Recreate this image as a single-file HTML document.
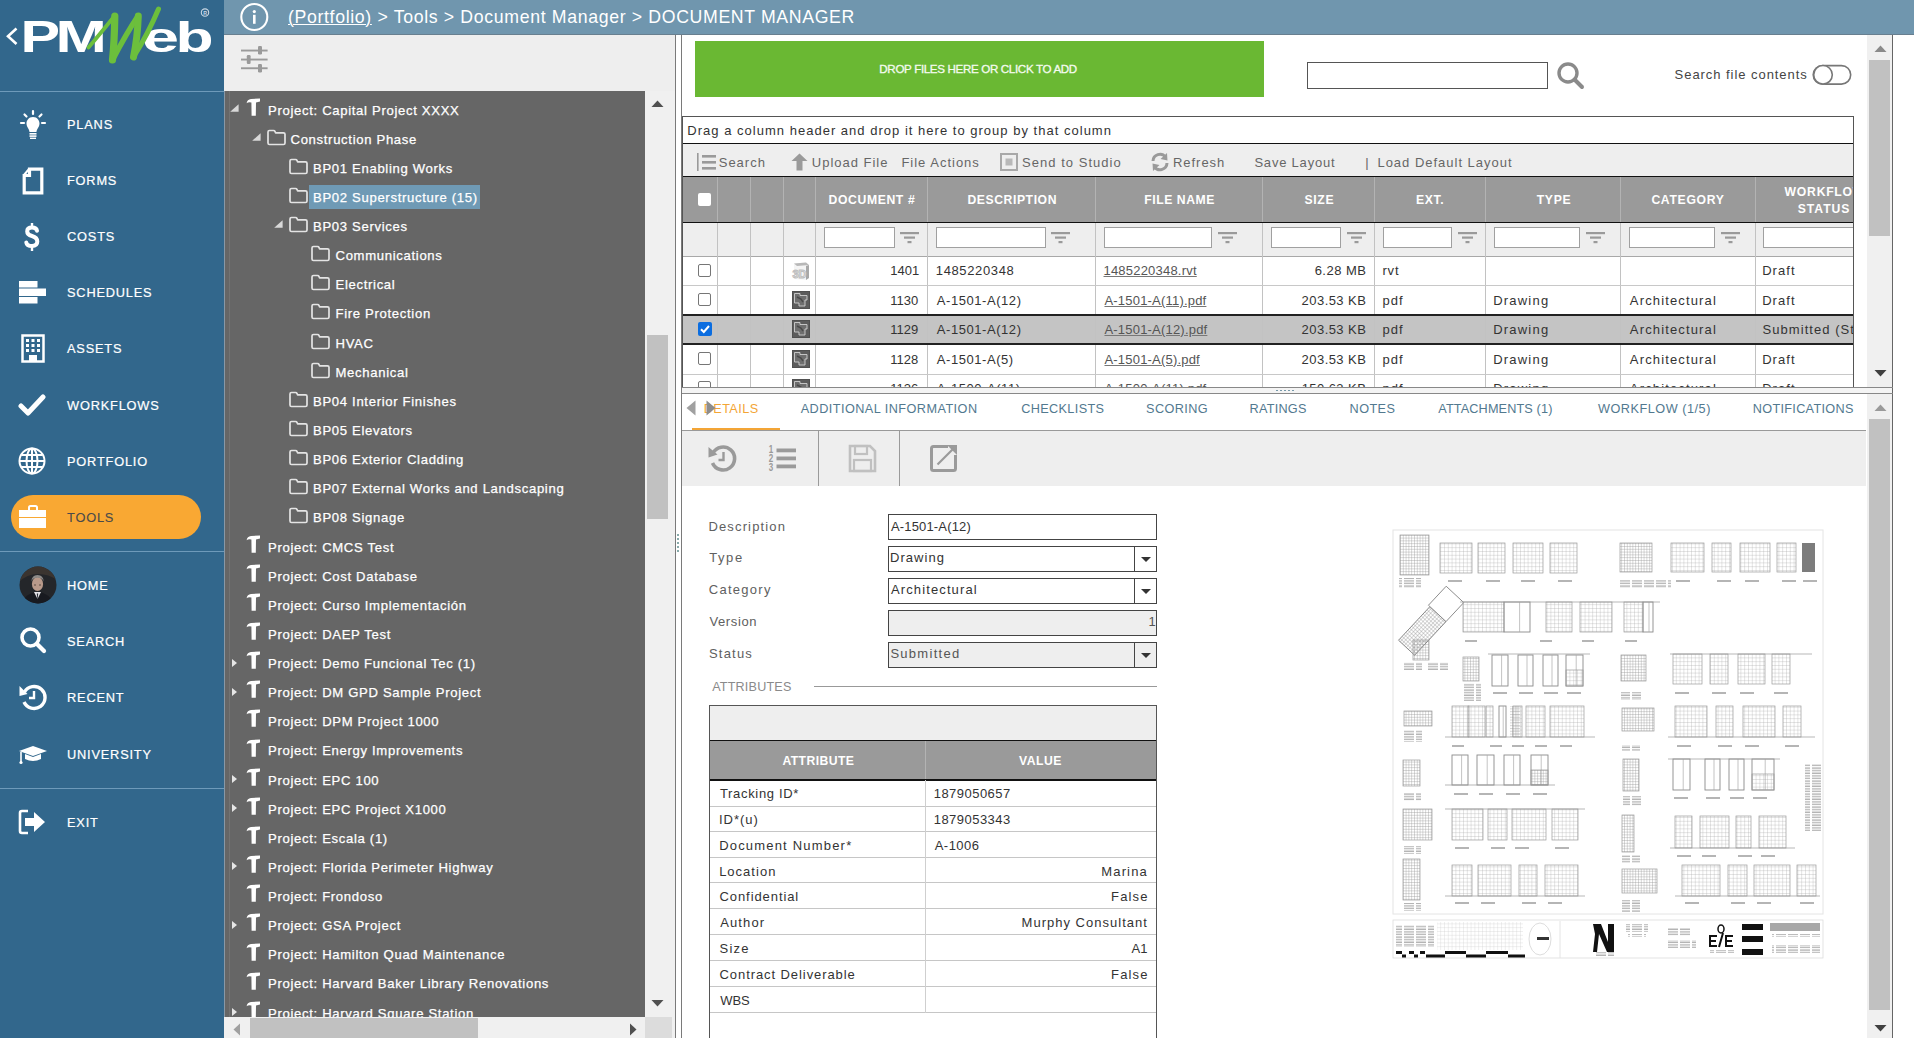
<!DOCTYPE html>
<html><head><meta charset="utf-8"><title>PMWeb Document Manager</title>
<style>
*{box-sizing:border-box;margin:0;padding:0}
html,body{width:1914px;height:1038px;overflow:hidden;background:#fff;font-family:"Liberation Sans",sans-serif}
.a{position:absolute}
.nw{white-space:nowrap}
#side{left:0;top:0;width:224px;height:1038px;background:#32678c}
.mi{position:absolute;left:67px;color:#fff;font-size:12.8px;letter-spacing:0.8px;line-height:15px;white-space:nowrap;-webkit-text-stroke:0.2px #fff}
.sep{position:absolute;left:0;width:224px;height:1px;background:#6e9aba}
.ico{position:absolute}
#hdr{left:224px;top:0;width:1690px;height:35px;background:#7096ae}
#crumb{left:288px;top:6px;color:#fff;font-size:17.7px;letter-spacing:0.655px;white-space:nowrap;line-height:22px}
#ttool{left:224px;top:35px;width:451px;height:56px;background:#eeeeee}
#tree{left:224px;top:91px;width:421px;height:926px;background:#666666;overflow:hidden}
.ti{position:absolute;color:#fff;font-size:13.1px;letter-spacing:0.68px;white-space:nowrap;line-height:16px;-webkit-text-stroke:0.25px #fff}
.tri{position:absolute;width:0;height:0}
.t{font-size:13px;color:#333;letter-spacing:0.45px;white-space:nowrap;line-height:16px;position:absolute}
.hd{font-size:12.3px;color:#fff;font-weight:bold;letter-spacing:0.7px;white-space:nowrap;line-height:15px;position:absolute;text-align:center}
.vl{position:absolute;width:1px;background:#cfcfcf}
.hl{position:absolute;height:1px;background:#d4d4d4}
.fi{position:absolute;height:20px;background:#fff;border:1px solid #a8a8a8}
.cb{position:absolute;width:13px;height:13px;border:1px solid #767676;border-radius:2px;background:#fff}
.tab{position:absolute;top:401px;font-size:12.7px;color:#4e7891;letter-spacing:0.45px;white-space:nowrap;line-height:15px}
.lbl{position:absolute;left:709px;font-size:13px;color:#555;letter-spacing:0.5px;line-height:16px;white-space:nowrap}
.inp{position:absolute;left:888px;width:269px;height:26px;border:1px solid #444;background:#fff}
.inp span{position:absolute;left:2px;top:4px;font-size:13px;color:#333;letter-spacing:0.45px;line-height:16px;white-space:nowrap}
.dd{position:absolute;right:0;top:0;width:22px;height:24px;border-left:1px solid #444}
.dd:after{content:"";position:absolute;left:6px;top:10px;border-left:5px solid transparent;border-right:5px solid transparent;border-top:5px solid #333}
.at{position:absolute;font-size:13px;color:#333;letter-spacing:0.5px;line-height:16px;white-space:nowrap}
</style></head><body>
<div id="side" class="a"><svg class="a" style="left:0;top:0" width="224" height="70" viewBox="0 0 224 70">
<path d="M16.5 28.5 L8 36.2 L16.5 44" fill="none" stroke="#fff" stroke-width="2.6"/>
<g transform="translate(20.5 52.4) scale(1.32 1)"><text x="0" y="0" font-family="Liberation Sans" font-weight="bold" font-size="45" fill="#fff">P</text></g>
<g transform="translate(55.5 52.4) scale(1.37 1)"><text x="0" y="0" font-family="Liberation Sans" font-weight="bold" font-size="45" fill="#fff">M</text></g>
<g transform="translate(142 51.8) scale(1.55 1)"><text x="0" y="0" font-family="Liberation Sans" font-weight="bold" font-size="43" fill="#fff">e</text></g>
<g transform="translate(175.5 51.8) scale(1.45 1)"><text x="0" y="0" font-family="Liberation Sans" font-weight="bold" font-size="43" fill="#fff">b</text></g>
<g fill="none" stroke="#6cbf3c" stroke-linecap="round" stroke-linejoin="round">
<path d="M88.5 47.5 Q100 34 114.5 16" stroke-width="3.8"/>
<path d="M114.8 16 Q114.5 40 112.5 60" stroke-width="7.2"/>
<path d="M112.5 60 Q126 34 138 16" stroke-width="5.4"/>
<path d="M138.3 16 Q137.5 38 133.5 57" stroke-width="7"/>
<path d="M133.5 57 Q148 34 158.5 9" stroke-width="5"/>
</g>
<circle cx="205" cy="12.6" r="3.7" fill="none" stroke="#c9d8e4" stroke-width="1.1"/>
<text x="203.3" y="14.7" font-family="Liberation Sans" font-size="5.2" font-weight="bold" fill="#c9d8e4">R</text>
</svg><div class="sep" style="top:91px"></div><div class="mi" style="top:117px">PLANS</div><div class="mi" style="top:173px">FORMS</div><div class="mi" style="top:229px">COSTS</div><div class="mi" style="top:285px">SCHEDULES</div><div class="mi" style="top:341px">ASSETS</div><div class="mi" style="top:398px">WORKFLOWS</div><div class="mi" style="top:454px">PORTFOLIO</div><div class="a" style="left:11px;top:495px;width:190px;height:44px;border-radius:22px;background:#f9a833"></div><div class="mi" style="top:510px;color:#4a4a4a;-webkit-text-stroke:0.1px #4a4a4a">TOOLS</div><div class="sep" style="top:551px"></div><div class="mi" style="top:578px">HOME</div><div class="mi" style="top:634px">SEARCH</div><div class="mi" style="top:690px">RECENT</div><div class="mi" style="top:747px">UNIVERSITY</div><div class="sep" style="top:788px"></div><div class="mi" style="top:815px">EXIT</div>
<svg class="ico" style="left:17px;top:108px" width="32" height="34" viewBox="0 0 32 34">
 <g stroke="#fff" stroke-width="2.2" stroke-linecap="round"><line x1="16" y1="3" x2="16" y2="6"/><line x1="7.5" y1="6.5" x2="9.5" y2="8.5"/><line x1="24.5" y1="6.5" x2="22.5" y2="8.5"/><line x1="4" y1="15" x2="7" y2="15"/><line x1="25" y1="15" x2="28" y2="15"/></g>
 <path d="M16 9 C11.5 9 9.5 12.5 9.5 15.5 C9.5 19 12.5 21 12.5 24 L19.5 24 C19.5 21 22.5 19 22.5 15.5 C22.5 12.5 20.5 9 16 9 Z" fill="#fff"/>
 <rect x="12.5" y="25" width="7" height="1.6" fill="#fff"/><rect x="12.5" y="27.3" width="7" height="1.6" fill="#fff"/><rect x="13" y="29.6" width="6" height="1.4" fill="#fff"/>
</svg>
<svg class="ico" style="left:22px;top:167px" width="22" height="28" viewBox="0 0 22 28">
 <path d="M7.5 2.2 L19.8 2.2 L19.8 25.8 L2.2 25.8 L2.2 8.5 L7.5 8.5 Z" fill="none" stroke="#fff" stroke-width="3.2" stroke-linejoin="miter"/>
 <path d="M7 2 L2 8" stroke="#fff" stroke-width="2"/>
</svg>
<svg class="ico" style="left:21px;top:221px" width="22" height="32" viewBox="0 0 22 32">
 <path d="M16 9.8 Q15.5 6.5 11 6.5 Q6.2 6.5 6.2 10.4 Q6.2 13.6 11 15 Q16.3 16.5 16.3 20.6 Q16.3 25 11 25 Q5.8 25 5.3 21.5" fill="none" stroke="#fff" stroke-width="4" stroke-linecap="round"/>
 <line x1="11" y1="2" x2="11" y2="6" stroke="#fff" stroke-width="2.4"/><line x1="11" y1="25.5" x2="11" y2="30" stroke="#fff" stroke-width="2.4"/>
</svg>
<svg class="ico" style="left:19px;top:281px" width="28" height="24" viewBox="0 0 28 24">
 <rect x="0" y="0" width="18.5" height="6.5" fill="#fff"/><rect x="0" y="7.5" width="27" height="7.5" fill="#fff"/><rect x="0" y="16" width="18.5" height="6.5" fill="#fff"/>
</svg>
<svg class="ico" style="left:21px;top:334px" width="24" height="29" viewBox="0 0 24 29">
 <rect x="1.5" y="1.5" width="21" height="26" fill="none" stroke="#fff" stroke-width="2.5"/>
 <g fill="#fff">
 <rect x="5" y="5" width="3" height="3"/><rect x="10.5" y="5" width="3" height="3"/><rect x="16" y="5" width="3" height="3"/>
 <rect x="5" y="10" width="3" height="3"/><rect x="10.5" y="10" width="3" height="3"/><rect x="16" y="10" width="3" height="3"/>
 <rect x="5" y="15" width="3" height="3"/><rect x="10.5" y="15" width="3" height="3"/><rect x="16" y="15" width="3" height="3"/>
 <rect x="8" y="21" width="8" height="6"/></g>
</svg>
<svg class="ico" style="left:18px;top:392px" width="28" height="26" viewBox="0 0 28 26">
 <path d="M3 14 L10 21 L25 5" fill="none" stroke="#fff" stroke-width="5" stroke-linecap="round" stroke-linejoin="round"/>
</svg>
<svg class="ico" style="left:18px;top:447px" width="28" height="28" viewBox="0 0 28 28">
 <g fill="none" stroke="#fff" stroke-width="2"><circle cx="14" cy="14" r="12.5"/><ellipse cx="14" cy="14" rx="5.5" ry="12.5"/><line x1="14" y1="1.5" x2="14" y2="26.5"/><line x1="1.5" y1="14" x2="26.5" y2="14"/><line x1="3.5" y1="8" x2="24.5" y2="8"/><line x1="3.5" y1="20" x2="24.5" y2="20"/></g>
</svg>
<svg class="ico" style="left:18px;top:504px" width="30" height="26" viewBox="0 0 30 26">
 <path d="M11 6 L11 3.5 Q11 2 12.5 2 L17.5 2 Q19 2 19 3.5 L19 6" fill="none" stroke="#fff" stroke-width="2"/>
 <rect x="1" y="6" width="27" height="7" fill="#fff"/><rect x="1" y="14" width="27" height="10" fill="#fff"/>
</svg>
<svg class="ico" style="left:19px;top:566px" width="38" height="38" viewBox="0 0 38 38">
 <defs><clipPath id="avc"><circle cx="19" cy="19" r="18.5"/></clipPath></defs>
 <circle cx="19" cy="19" r="18.5" fill="#24262a"/>
 <g clip-path="url(#avc)">
  <path d="M0 0 L38 0 L38 14 Q30 8 19 8 Q8 8 0 16Z" fill="#3a3430"/>
  <ellipse cx="18.5" cy="18" rx="5.6" ry="7" fill="#b8998a"/>
  <path d="M12.6 15.5 Q12.5 9 18.5 9 Q24.5 9 24.5 15.5 Q23.5 11.5 18.5 11.8 Q13.5 11.5 12.6 15.5Z" fill="#8d8a88"/>
  <path d="M15 19 L17 19 M20 19 L22 19" stroke="#5a4a42" stroke-width="1"/>
  <path d="M3 38 Q5 27.5 18.5 26 Q32 27.5 34 38Z" fill="#181a20"/>
  <path d="M15 26 L18.5 33 L22 26Z" fill="#e6e6ea"/>
  <path d="M17.8 27.5 L18.5 35 L19.2 27.5Z" fill="#2a2d36"/>
 </g>
</svg>
<svg class="ico" style="left:19px;top:626px" width="28" height="28" viewBox="0 0 28 28">
 <circle cx="11.5" cy="11.5" r="8.5" fill="none" stroke="#fff" stroke-width="3.6"/>
 <line x1="18" y1="18" x2="25" y2="25" stroke="#fff" stroke-width="4.2" stroke-linecap="round"/>
</svg>
<svg class="ico" style="left:18px;top:683px" width="30" height="28" viewBox="0 0 30 28">
 <path d="M6.5 9 A11 11 0 1 1 6 19" fill="none" stroke="#fff" stroke-width="3.4"/>
 <path d="M1.5 3 L9.5 11 L1.5 13 Z" fill="#fff"/>
 <path d="M16 8 L16 15 L11 15" fill="none" stroke="#fff" stroke-width="2.4"/>
</svg>
<svg class="ico" style="left:18px;top:743px" width="30" height="24" viewBox="0 0 30 24">
 <path d="M1 8 L15 3 L29 8 L15 13 Z" fill="#fff"/>
 <path d="M7 11 L7 16 Q15 20 23 16 L23 11 L15 14 Z" fill="#fff"/>
 <line x1="3" y1="9" x2="3" y2="19" stroke="#fff" stroke-width="1.6"/>
 <circle cx="3" cy="19.5" r="1.6" fill="#fff"/>
</svg>
<svg class="ico" style="left:17px;top:808px" width="30" height="28" viewBox="0 0 30 28">
 <path d="M11 3 L5 3 Q3 3 3 5 L3 23 Q3 25 5 25 L11 25" fill="none" stroke="#fff" stroke-width="2.6"/>
 <path d="M8 10 L17 10 L17 4 L28 14 L17 24 L17 18 L8 18 Z" fill="#fff"/>
</svg>
</div><div id="hdr" class="a"></div><div class="a" style="left:224px;top:34px;width:1690px;height:1px;background:#687f8f"></div><div class="a" style="left:224px;top:35px;width:451px;height:3px;background:linear-gradient(#f6f6f6,#f1ecea)"></div><svg class="a" style="left:239px;top:2px" width="31" height="31" viewBox="0 0 31 31">
<circle cx="15.3" cy="15" r="13" fill="none" stroke="#fff" stroke-width="2.1"/>
<circle cx="15.3" cy="9.6" r="1.6" fill="#fff"/><rect x="14" y="12.8" width="2.6" height="9" fill="#fff"/>
</svg><div id="crumb" class="a"><span style="text-decoration:underline;text-decoration-thickness:1px;text-underline-offset:1px">(Portfolio)</span> &gt; Tools &gt; Document Manager &gt; DOCUMENT MANAGER</div><div id="ttool" class="a"></div><svg class="a" style="left:239px;top:44px" width="32" height="32" viewBox="0 0 32 32">
<g fill="#9a9a9a"><rect x="2" y="5.6" width="26.6" height="1.9"/><rect x="2" y="14.6" width="26.6" height="1.9"/><rect x="2" y="23.3" width="26.6" height="1.9"/>
<rect x="19" y="2" width="4" height="8.5" rx="1.2"/><rect x="7.8" y="11" width="3.8" height="9" rx="1.2"/><rect x="19" y="20" width="4" height="8.5" rx="1.2"/></g>
</svg><div id="tree" class="a"><div class="ti" style="left:44.0px;top:11.5px">Project: Capital Project XXXX</div><svg class="a" style="left:22.0px;top:6.7px" width="16" height="19" viewBox="0 0 16 19"><path d="M0.6 5.2 Q1.2 1.6 5 1.1 L14 0.4 L14 3.6 L10 4.6 L9.8 17.8 L5.6 17.8 L5.4 4.6 Q2.6 3.8 0.6 5.2 Z" fill="#fff"/></svg><svg class="a" style="left:5.5px;top:12.7px" width="9" height="8" viewBox="0 0 9 8"><path d="M8.6 0.2 L8.6 7.8 L0.2 7.8 Z" fill="#d8d8d8"/></svg><div class="ti" style="left:66.5px;top:40.6px">Construction Phase</div><svg class="a" style="left:42.8px;top:37.6px" width="19" height="17" viewBox="0 0 19 17"><path d="M2.5 15.5 Q1 15.5 1 14 L1 3 Q1 1.5 2.5 1.5 L6.5 1.5 Q7.5 1.5 8 2.5 L8.6 3.8 L16.5 3.8 Q18 3.8 18 5.3 L18 14 Q18 15.5 16.5 15.5 Z" fill="none" stroke="#e4e4e4" stroke-width="1.7" stroke-linejoin="round"/></svg><svg class="a" style="left:27.8px;top:41.8px" width="9" height="8" viewBox="0 0 9 8"><path d="M8.6 0.2 L8.6 7.8 L0.2 7.8 Z" fill="#d8d8d8"/></svg><div class="ti" style="left:89.0px;top:69.8px">BP01 Enabling Works</div><svg class="a" style="left:65.0px;top:66.8px" width="19" height="17" viewBox="0 0 19 17"><path d="M2.5 15.5 Q1 15.5 1 14 L1 3 Q1 1.5 2.5 1.5 L6.5 1.5 Q7.5 1.5 8 2.5 L8.6 3.8 L16.5 3.8 Q18 3.8 18 5.3 L18 14 Q18 15.5 16.5 15.5 Z" fill="none" stroke="#e4e4e4" stroke-width="1.7" stroke-linejoin="round"/></svg><div class="a" style="left:85px;top:81.4px"></div><div class="a" style="left:85.0px;top:94.4px;width:171px;height:23.4px;background:#6f9ab5"></div><div class="ti" style="left:89.0px;top:98.9px">BP02 Superstructure (15)</div><svg class="a" style="left:65.0px;top:95.9px" width="19" height="17" viewBox="0 0 19 17"><path d="M2.5 15.5 Q1 15.5 1 14 L1 3 Q1 1.5 2.5 1.5 L6.5 1.5 Q7.5 1.5 8 2.5 L8.6 3.8 L16.5 3.8 Q18 3.8 18 5.3 L18 14 Q18 15.5 16.5 15.5 Z" fill="none" stroke="#e4e4e4" stroke-width="1.7" stroke-linejoin="round"/></svg><div class="ti" style="left:89.0px;top:128.0px">BP03 Services</div><svg class="a" style="left:65.0px;top:125.0px" width="19" height="17" viewBox="0 0 19 17"><path d="M2.5 15.5 Q1 15.5 1 14 L1 3 Q1 1.5 2.5 1.5 L6.5 1.5 Q7.5 1.5 8 2.5 L8.6 3.8 L16.5 3.8 Q18 3.8 18 5.3 L18 14 Q18 15.5 16.5 15.5 Z" fill="none" stroke="#e4e4e4" stroke-width="1.7" stroke-linejoin="round"/></svg><svg class="a" style="left:50.1px;top:129.2px" width="9" height="8" viewBox="0 0 9 8"><path d="M8.6 0.2 L8.6 7.8 L0.2 7.8 Z" fill="#d8d8d8"/></svg><div class="ti" style="left:111.5px;top:157.2px">Communications</div><svg class="a" style="left:87.2px;top:154.2px" width="19" height="17" viewBox="0 0 19 17"><path d="M2.5 15.5 Q1 15.5 1 14 L1 3 Q1 1.5 2.5 1.5 L6.5 1.5 Q7.5 1.5 8 2.5 L8.6 3.8 L16.5 3.8 Q18 3.8 18 5.3 L18 14 Q18 15.5 16.5 15.5 Z" fill="none" stroke="#e4e4e4" stroke-width="1.7" stroke-linejoin="round"/></svg><div class="ti" style="left:111.5px;top:186.3px">Electrical</div><svg class="a" style="left:87.2px;top:183.3px" width="19" height="17" viewBox="0 0 19 17"><path d="M2.5 15.5 Q1 15.5 1 14 L1 3 Q1 1.5 2.5 1.5 L6.5 1.5 Q7.5 1.5 8 2.5 L8.6 3.8 L16.5 3.8 Q18 3.8 18 5.3 L18 14 Q18 15.5 16.5 15.5 Z" fill="none" stroke="#e4e4e4" stroke-width="1.7" stroke-linejoin="round"/></svg><div class="ti" style="left:111.5px;top:215.4px">Fire Protection</div><svg class="a" style="left:87.2px;top:212.4px" width="19" height="17" viewBox="0 0 19 17"><path d="M2.5 15.5 Q1 15.5 1 14 L1 3 Q1 1.5 2.5 1.5 L6.5 1.5 Q7.5 1.5 8 2.5 L8.6 3.8 L16.5 3.8 Q18 3.8 18 5.3 L18 14 Q18 15.5 16.5 15.5 Z" fill="none" stroke="#e4e4e4" stroke-width="1.7" stroke-linejoin="round"/></svg><div class="ti" style="left:111.5px;top:244.5px">HVAC</div><svg class="a" style="left:87.2px;top:241.5px" width="19" height="17" viewBox="0 0 19 17"><path d="M2.5 15.5 Q1 15.5 1 14 L1 3 Q1 1.5 2.5 1.5 L6.5 1.5 Q7.5 1.5 8 2.5 L8.6 3.8 L16.5 3.8 Q18 3.8 18 5.3 L18 14 Q18 15.5 16.5 15.5 Z" fill="none" stroke="#e4e4e4" stroke-width="1.7" stroke-linejoin="round"/></svg><div class="ti" style="left:111.5px;top:273.7px">Mechanical</div><svg class="a" style="left:87.2px;top:270.7px" width="19" height="17" viewBox="0 0 19 17"><path d="M2.5 15.5 Q1 15.5 1 14 L1 3 Q1 1.5 2.5 1.5 L6.5 1.5 Q7.5 1.5 8 2.5 L8.6 3.8 L16.5 3.8 Q18 3.8 18 5.3 L18 14 Q18 15.5 16.5 15.5 Z" fill="none" stroke="#e4e4e4" stroke-width="1.7" stroke-linejoin="round"/></svg><div class="ti" style="left:89.0px;top:302.8px">BP04 Interior Finishes</div><svg class="a" style="left:65.0px;top:299.8px" width="19" height="17" viewBox="0 0 19 17"><path d="M2.5 15.5 Q1 15.5 1 14 L1 3 Q1 1.5 2.5 1.5 L6.5 1.5 Q7.5 1.5 8 2.5 L8.6 3.8 L16.5 3.8 Q18 3.8 18 5.3 L18 14 Q18 15.5 16.5 15.5 Z" fill="none" stroke="#e4e4e4" stroke-width="1.7" stroke-linejoin="round"/></svg><div class="ti" style="left:89.0px;top:331.9px">BP05 Elevators</div><svg class="a" style="left:65.0px;top:328.9px" width="19" height="17" viewBox="0 0 19 17"><path d="M2.5 15.5 Q1 15.5 1 14 L1 3 Q1 1.5 2.5 1.5 L6.5 1.5 Q7.5 1.5 8 2.5 L8.6 3.8 L16.5 3.8 Q18 3.8 18 5.3 L18 14 Q18 15.5 16.5 15.5 Z" fill="none" stroke="#e4e4e4" stroke-width="1.7" stroke-linejoin="round"/></svg><div class="ti" style="left:89.0px;top:361.1px">BP06 Exterior Cladding</div><svg class="a" style="left:65.0px;top:358.1px" width="19" height="17" viewBox="0 0 19 17"><path d="M2.5 15.5 Q1 15.5 1 14 L1 3 Q1 1.5 2.5 1.5 L6.5 1.5 Q7.5 1.5 8 2.5 L8.6 3.8 L16.5 3.8 Q18 3.8 18 5.3 L18 14 Q18 15.5 16.5 15.5 Z" fill="none" stroke="#e4e4e4" stroke-width="1.7" stroke-linejoin="round"/></svg><div class="ti" style="left:89.0px;top:390.2px">BP07 External Works and Landscaping</div><svg class="a" style="left:65.0px;top:387.2px" width="19" height="17" viewBox="0 0 19 17"><path d="M2.5 15.5 Q1 15.5 1 14 L1 3 Q1 1.5 2.5 1.5 L6.5 1.5 Q7.5 1.5 8 2.5 L8.6 3.8 L16.5 3.8 Q18 3.8 18 5.3 L18 14 Q18 15.5 16.5 15.5 Z" fill="none" stroke="#e4e4e4" stroke-width="1.7" stroke-linejoin="round"/></svg><div class="ti" style="left:89.0px;top:419.3px">BP08 Signage</div><svg class="a" style="left:65.0px;top:416.3px" width="19" height="17" viewBox="0 0 19 17"><path d="M2.5 15.5 Q1 15.5 1 14 L1 3 Q1 1.5 2.5 1.5 L6.5 1.5 Q7.5 1.5 8 2.5 L8.6 3.8 L16.5 3.8 Q18 3.8 18 5.3 L18 14 Q18 15.5 16.5 15.5 Z" fill="none" stroke="#e4e4e4" stroke-width="1.7" stroke-linejoin="round"/></svg><div class="ti" style="left:44.0px;top:448.5px">Project: CMCS Test</div><svg class="a" style="left:22.0px;top:443.7px" width="16" height="19" viewBox="0 0 16 19"><path d="M0.6 5.2 Q1.2 1.6 5 1.1 L14 0.4 L14 3.6 L10 4.6 L9.8 17.8 L5.6 17.8 L5.4 4.6 Q2.6 3.8 0.6 5.2 Z" fill="#fff"/></svg><div class="ti" style="left:44.0px;top:477.6px">Project: Cost Database</div><svg class="a" style="left:22.0px;top:472.8px" width="16" height="19" viewBox="0 0 16 19"><path d="M0.6 5.2 Q1.2 1.6 5 1.1 L14 0.4 L14 3.6 L10 4.6 L9.8 17.8 L5.6 17.8 L5.4 4.6 Q2.6 3.8 0.6 5.2 Z" fill="#fff"/></svg><div class="ti" style="left:44.0px;top:506.7px">Project: Curso Implementación</div><svg class="a" style="left:22.0px;top:501.9px" width="16" height="19" viewBox="0 0 16 19"><path d="M0.6 5.2 Q1.2 1.6 5 1.1 L14 0.4 L14 3.6 L10 4.6 L9.8 17.8 L5.6 17.8 L5.4 4.6 Q2.6 3.8 0.6 5.2 Z" fill="#fff"/></svg><div class="ti" style="left:44.0px;top:535.8px">Project: DAEP Test</div><svg class="a" style="left:22.0px;top:531.0px" width="16" height="19" viewBox="0 0 16 19"><path d="M0.6 5.2 Q1.2 1.6 5 1.1 L14 0.4 L14 3.6 L10 4.6 L9.8 17.8 L5.6 17.8 L5.4 4.6 Q2.6 3.8 0.6 5.2 Z" fill="#fff"/></svg><div class="ti" style="left:44.0px;top:565.0px">Project: Demo Funcional Tec (1)</div><svg class="a" style="left:22.0px;top:560.2px" width="16" height="19" viewBox="0 0 16 19"><path d="M0.6 5.2 Q1.2 1.6 5 1.1 L14 0.4 L14 3.6 L10 4.6 L9.8 17.8 L5.6 17.8 L5.4 4.6 Q2.6 3.8 0.6 5.2 Z" fill="#fff"/></svg><svg class="a" style="left:7px;top:566.5px" width="7" height="10" viewBox="0 0 7 10"><path d="M1 1 L6 5 L1 9 Z" fill="#e6e6e6"/></svg><div class="ti" style="left:44.0px;top:594.1px">Project: DM GPD Sample Project</div><svg class="a" style="left:22.0px;top:589.3px" width="16" height="19" viewBox="0 0 16 19"><path d="M0.6 5.2 Q1.2 1.6 5 1.1 L14 0.4 L14 3.6 L10 4.6 L9.8 17.8 L5.6 17.8 L5.4 4.6 Q2.6 3.8 0.6 5.2 Z" fill="#fff"/></svg><svg class="a" style="left:7px;top:595.6px" width="7" height="10" viewBox="0 0 7 10"><path d="M1 1 L6 5 L1 9 Z" fill="#e6e6e6"/></svg><div class="ti" style="left:44.0px;top:623.2px">Project: DPM Project 1000</div><svg class="a" style="left:22.0px;top:618.4px" width="16" height="19" viewBox="0 0 16 19"><path d="M0.6 5.2 Q1.2 1.6 5 1.1 L14 0.4 L14 3.6 L10 4.6 L9.8 17.8 L5.6 17.8 L5.4 4.6 Q2.6 3.8 0.6 5.2 Z" fill="#fff"/></svg><div class="ti" style="left:44.0px;top:652.4px">Project: Energy Improvements</div><svg class="a" style="left:22.0px;top:647.6px" width="16" height="19" viewBox="0 0 16 19"><path d="M0.6 5.2 Q1.2 1.6 5 1.1 L14 0.4 L14 3.6 L10 4.6 L9.8 17.8 L5.6 17.8 L5.4 4.6 Q2.6 3.8 0.6 5.2 Z" fill="#fff"/></svg><div class="ti" style="left:44.0px;top:681.5px">Project: EPC 100</div><svg class="a" style="left:22.0px;top:676.7px" width="16" height="19" viewBox="0 0 16 19"><path d="M0.6 5.2 Q1.2 1.6 5 1.1 L14 0.4 L14 3.6 L10 4.6 L9.8 17.8 L5.6 17.8 L5.4 4.6 Q2.6 3.8 0.6 5.2 Z" fill="#fff"/></svg><svg class="a" style="left:7px;top:683.0px" width="7" height="10" viewBox="0 0 7 10"><path d="M1 1 L6 5 L1 9 Z" fill="#e6e6e6"/></svg><div class="ti" style="left:44.0px;top:710.6px">Project: EPC Project X1000</div><svg class="a" style="left:22.0px;top:705.8px" width="16" height="19" viewBox="0 0 16 19"><path d="M0.6 5.2 Q1.2 1.6 5 1.1 L14 0.4 L14 3.6 L10 4.6 L9.8 17.8 L5.6 17.8 L5.4 4.6 Q2.6 3.8 0.6 5.2 Z" fill="#fff"/></svg><svg class="a" style="left:7px;top:712.1px" width="7" height="10" viewBox="0 0 7 10"><path d="M1 1 L6 5 L1 9 Z" fill="#e6e6e6"/></svg><div class="ti" style="left:44.0px;top:739.8px">Project: Escala (1)</div><svg class="a" style="left:22.0px;top:735.0px" width="16" height="19" viewBox="0 0 16 19"><path d="M0.6 5.2 Q1.2 1.6 5 1.1 L14 0.4 L14 3.6 L10 4.6 L9.8 17.8 L5.6 17.8 L5.4 4.6 Q2.6 3.8 0.6 5.2 Z" fill="#fff"/></svg><div class="ti" style="left:44.0px;top:768.9px">Project: Florida Perimeter Highway</div><svg class="a" style="left:22.0px;top:764.1px" width="16" height="19" viewBox="0 0 16 19"><path d="M0.6 5.2 Q1.2 1.6 5 1.1 L14 0.4 L14 3.6 L10 4.6 L9.8 17.8 L5.6 17.8 L5.4 4.6 Q2.6 3.8 0.6 5.2 Z" fill="#fff"/></svg><svg class="a" style="left:7px;top:770.4px" width="7" height="10" viewBox="0 0 7 10"><path d="M1 1 L6 5 L1 9 Z" fill="#e6e6e6"/></svg><div class="ti" style="left:44.0px;top:798.0px">Project: Frondoso</div><svg class="a" style="left:22.0px;top:793.2px" width="16" height="19" viewBox="0 0 16 19"><path d="M0.6 5.2 Q1.2 1.6 5 1.1 L14 0.4 L14 3.6 L10 4.6 L9.8 17.8 L5.6 17.8 L5.4 4.6 Q2.6 3.8 0.6 5.2 Z" fill="#fff"/></svg><div class="ti" style="left:44.0px;top:827.1px">Project: GSA Project</div><svg class="a" style="left:22.0px;top:822.3px" width="16" height="19" viewBox="0 0 16 19"><path d="M0.6 5.2 Q1.2 1.6 5 1.1 L14 0.4 L14 3.6 L10 4.6 L9.8 17.8 L5.6 17.8 L5.4 4.6 Q2.6 3.8 0.6 5.2 Z" fill="#fff"/></svg><svg class="a" style="left:7px;top:828.6px" width="7" height="10" viewBox="0 0 7 10"><path d="M1 1 L6 5 L1 9 Z" fill="#e6e6e6"/></svg><div class="ti" style="left:44.0px;top:856.3px">Project: Hamilton Quad Maintenance</div><svg class="a" style="left:22.0px;top:851.5px" width="16" height="19" viewBox="0 0 16 19"><path d="M0.6 5.2 Q1.2 1.6 5 1.1 L14 0.4 L14 3.6 L10 4.6 L9.8 17.8 L5.6 17.8 L5.4 4.6 Q2.6 3.8 0.6 5.2 Z" fill="#fff"/></svg><div class="ti" style="left:44.0px;top:885.4px">Project: Harvard Baker Library Renovations</div><svg class="a" style="left:22.0px;top:880.6px" width="16" height="19" viewBox="0 0 16 19"><path d="M0.6 5.2 Q1.2 1.6 5 1.1 L14 0.4 L14 3.6 L10 4.6 L9.8 17.8 L5.6 17.8 L5.4 4.6 Q2.6 3.8 0.6 5.2 Z" fill="#fff"/></svg><div class="ti" style="left:44.0px;top:914.5px">Project: Harvard Square Station</div><svg class="a" style="left:22.0px;top:909.7px" width="16" height="19" viewBox="0 0 16 19"><path d="M0.6 5.2 Q1.2 1.6 5 1.1 L14 0.4 L14 3.6 L10 4.6 L9.8 17.8 L5.6 17.8 L5.4 4.6 Q2.6 3.8 0.6 5.2 Z" fill="#fff"/></svg><svg class="a" style="left:7px;top:916.0px" width="7" height="10" viewBox="0 0 7 10"><path d="M1 1 L6 5 L1 9 Z" fill="#e6e6e6"/></svg><div class="a" style="left:5px;top:0;width:1px;height:926px;background:#737373"></div></div><div class="a" style="left:224px;top:91px;width:1px;height:926px;background:#8898a6"></div><div class="a" style="left:645px;top:91px;width:30px;height:926px;background:#f0f0f0"></div><div class="a" style="left:647px;top:335px;width:21px;height:184px;background:#c1c1c1"></div><svg class="a" style="left:651px;top:99px" width="13" height="9"><path d="M0.5 8 L6.5 1.5 L12.5 8Z" fill="#505050"/></svg><svg class="a" style="left:651px;top:999px" width="13" height="9"><path d="M0.5 1 L6.5 7.5 L12.5 1Z" fill="#505050"/></svg><div class="a" style="left:224px;top:1017px;width:421px;height:21px;background:#f0f0f0"></div><div class="a" style="left:645px;top:1017px;width:27px;height:21px;background:#dcdcdc"></div><div class="a" style="left:672px;top:1017px;width:3px;height:21px;background:#f0f0f0"></div><div class="a" style="left:250px;top:1018px;width:228px;height:20px;background:#c1c1c1"></div><svg class="a" style="left:232px;top:1023px" width="9" height="13"><path d="M8 0.5 L1.5 6.5 L8 12.5Z" fill="#a0a0a0"/></svg><svg class="a" style="left:629px;top:1023px" width="9" height="13"><path d="M1 0.5 L7.5 6.5 L1 12.5Z" fill="#505050"/></svg><div class="a" style="left:676px;top:35px;width:6px;height:1003px;background:#fff"></div><div class="a" style="left:675px;top:35px;width:1px;height:1003px;background:#7a7a7a"></div><div class="a" style="left:681px;top:35px;width:1px;height:1003px;background:#7a7a7a"></div><div class="a" style="left:677px;top:534px;width:2px;height:2px;background:#8aa"></div><div class="a" style="left:677px;top:538px;width:2px;height:2px;background:#8aa"></div><div class="a" style="left:677px;top:542px;width:2px;height:2px;background:#8aa"></div><div class="a" style="left:677px;top:546px;width:2px;height:2px;background:#8aa"></div><div class="a" style="left:677px;top:550px;width:2px;height:2px;background:#8aa"></div><div class="a" style="left:695px;top:41px;width:569px;height:56px;background:#6ab833"></div><div class="a nw" style="left:879.35px;top:61.78px;font-size:11.6px;line-height:14px;color:#f4fbef;letter-spacing:-0.342px;-webkit-text-stroke:0.3px #f4fbef">DROP FILES HERE OR CLICK TO ADD</div><div class="a" style="left:1307px;top:62px;width:241px;height:27px;border:1px solid #555;background:#fff"></div><svg class="a" style="left:1556px;top:61px" width="30" height="30" viewBox="0 0 30 30">
<circle cx="12" cy="12" r="9" fill="none" stroke="#8a8a8a" stroke-width="3.4"/>
<line x1="18.5" y1="18.5" x2="26" y2="26" stroke="#8a8a8a" stroke-width="4" stroke-linecap="round"/></svg><div class="a nw" style="left:1674.61px;top:67.40px;font-size:13px;line-height:16px;color:#444;letter-spacing:0.947px">Search file contents</div><svg class="a" style="left:1812px;top:64px" width="40" height="22" viewBox="0 0 40 22">
<rect x="1.2" y="1.6" width="37.5" height="18.5" rx="9.25" fill="#fff" stroke="#777" stroke-width="1.6"/>
<circle cx="11" cy="10.85" r="9.3" fill="#fff" stroke="#777" stroke-width="1.6"/></svg><div class="a" style="left:1867px;top:35px;width:25px;height:352px;background:#f0f0f0"></div><div class="a" style="left:1869px;top:60px;width:21px;height:176px;background:#c1c1c1"></div><svg class="a" style="left:1874px;top:44px" width="13" height="9"><path d="M0.5 8 L6.5 1.5 L12.5 8Z" fill="#8a8a8a"/></svg><svg class="a" style="left:1874px;top:369px" width="13" height="9"><path d="M0.5 1 L6.5 7.5 L12.5 1Z" fill="#404040"/></svg><div class="a" style="left:1892px;top:35px;width:1px;height:1003px;background:#666"></div><div class="a" style="left:682px;top:116px;width:1172px;height:28px;border:1px solid #555;border-bottom:none;background:#fff"></div><div class="a nw" style="left:687.33px;top:122.80px;font-size:13px;line-height:16px;color:#333;letter-spacing:1.014px">Drag a column header and drop it here to group by that column</div><div class="a" style="left:682px;top:143px;width:1172px;height:244px;border-left:1px solid #555;border-right:1px solid #555;overflow:hidden"><div class="a" style="left:0px;top:0px;width:1172px;height:1px;background:#111"></div><div class="a" style="left:0px;top:1px;width:1172px;height:32px;background:#eeeeee"></div><div class="a" style="left:0px;top:33px;width:1172px;height:1px;background:#111"></div><div class="a" style="left:0px;top:34px;width:1172px;height:45px;background:#9a9a9a"></div><div class="a" style="left:0px;top:79px;width:1172px;height:1px;background:#111"></div><div class="a" style="left:0px;top:80px;width:1172px;height:33px;background:#eeeeee"></div><div class="a" style="left:0px;top:113px;width:1172px;height:1px;background:#a8a8a8"></div><div class="a" style="left:0px;top:172px;width:1172px;height:30px;background:#c4c4c4"></div><div class="a" style="left:34px;top:80px;width:1px;height:170px;background:#c2c2c2"></div><div class="a" style="left:67px;top:80px;width:1px;height:170px;background:#c2c2c2"></div><div class="a" style="left:100px;top:80px;width:1px;height:170px;background:#c2c2c2"></div><div class="a" style="left:132px;top:80px;width:1px;height:170px;background:#c2c2c2"></div><div class="a" style="left:244px;top:80px;width:1px;height:170px;background:#c2c2c2"></div><div class="a" style="left:412px;top:80px;width:1px;height:170px;background:#c2c2c2"></div><div class="a" style="left:579px;top:80px;width:1px;height:170px;background:#c2c2c2"></div><div class="a" style="left:691px;top:80px;width:1px;height:170px;background:#c2c2c2"></div><div class="a" style="left:802px;top:80px;width:1px;height:170px;background:#c2c2c2"></div><div class="a" style="left:937px;top:80px;width:1px;height:170px;background:#c2c2c2"></div><div class="a" style="left:1072px;top:80px;width:1px;height:170px;background:#c2c2c2"></div><div class="a" style="left:34px;top:34px;width:1px;height:45px;background:#b3b3b3"></div><div class="a" style="left:67px;top:34px;width:1px;height:45px;background:#b3b3b3"></div><div class="a" style="left:100px;top:34px;width:1px;height:45px;background:#b3b3b3"></div><div class="a" style="left:132px;top:34px;width:1px;height:45px;background:#b3b3b3"></div><div class="a" style="left:244px;top:34px;width:1px;height:45px;background:#b3b3b3"></div><div class="a" style="left:412px;top:34px;width:1px;height:45px;background:#b3b3b3"></div><div class="a" style="left:579px;top:34px;width:1px;height:45px;background:#b3b3b3"></div><div class="a" style="left:691px;top:34px;width:1px;height:45px;background:#b3b3b3"></div><div class="a" style="left:802px;top:34px;width:1px;height:45px;background:#b3b3b3"></div><div class="a" style="left:937px;top:34px;width:1px;height:45px;background:#b3b3b3"></div><div class="a" style="left:1072px;top:34px;width:1px;height:45px;background:#b3b3b3"></div><div class="a" style="left:0px;top:142px;width:1172px;height:1px;background:#c8c8c8"></div><div class="a" style="left:0px;top:171px;width:1172px;height:2px;background:#222"></div><div class="a" style="left:0px;top:200px;width:1172px;height:2px;background:#222"></div><div class="a" style="left:0px;top:231px;width:1172px;height:1px;background:#c8c8c8"></div><div class="a" style="left:0px;top:260px;width:1172px;height:1px;background:#c8c8c8"></div><div class="a" style="left:15px;top:50px;width:13px;height:13px;background:#fff;border-radius:2px"></div><div class="a nw" style="left:145.57px;top:50.47px;font-size:12.2px;line-height:15px;color:#fff;letter-spacing:0.619px;font-weight:bold">DOCUMENT #</div><div class="a nw" style="left:284.45px;top:50.47px;font-size:12.2px;line-height:15px;color:#fff;letter-spacing:0.572px;font-weight:bold">DESCRIPTION</div><div class="a nw" style="left:461.20px;top:50.47px;font-size:12.2px;line-height:15px;color:#fff;letter-spacing:0.564px;font-weight:bold">FILE NAME</div><div class="a nw" style="left:621.58px;top:50.47px;font-size:12.2px;line-height:15px;color:#fff;letter-spacing:0.613px;font-weight:bold">SIZE</div><div class="a nw" style="left:733.06px;top:50.47px;font-size:12.2px;line-height:15px;color:#fff;letter-spacing:0.594px;font-weight:bold">EXT.</div><div class="a nw" style="left:853.64px;top:50.47px;font-size:12.2px;line-height:15px;color:#fff;letter-spacing:0.729px;font-weight:bold">TYPE</div><div class="a nw" style="left:968.38px;top:50.47px;font-size:12.2px;line-height:15px;color:#fff;letter-spacing:0.684px;font-weight:bold">CATEGORY</div><div class="a nw" style="left:1101.62px;top:41.67px;font-size:12.2px;line-height:15px;color:#fff;letter-spacing:0.745px;font-weight:bold">WORKFLOW</div><div class="a nw" style="left:1114.76px;top:59.07px;font-size:12.2px;line-height:15px;color:#fff;letter-spacing:0.959px;font-weight:bold">STATUS</div><div class="a" style="left:141px;top:84px;width:71px;height:21px;background:#fff;border:1px solid #a0a0a0"></div><svg class="a" style="left:217.1px;top:88px" width="19" height="15" viewBox="0 0 19 15"><g fill="#9a9a9a"><rect x="0" y="1" width="19" height="2.2"/><rect x="4" y="5.5" width="11" height="2.2"/><rect x="7.5" y="10" width="4" height="2.2"/></g></svg><div class="a" style="left:253px;top:84px;width:110px;height:21px;background:#fff;border:1px solid #a0a0a0"></div><svg class="a" style="left:368.1px;top:88px" width="19" height="15" viewBox="0 0 19 15"><g fill="#9a9a9a"><rect x="0" y="1" width="19" height="2.2"/><rect x="4" y="5.5" width="11" height="2.2"/><rect x="7.5" y="10" width="4" height="2.2"/></g></svg><div class="a" style="left:421px;top:84px;width:108px;height:21px;background:#fff;border:1px solid #a0a0a0"></div><svg class="a" style="left:535.0px;top:88px" width="19" height="15" viewBox="0 0 19 15"><g fill="#9a9a9a"><rect x="0" y="1" width="19" height="2.2"/><rect x="4" y="5.5" width="11" height="2.2"/><rect x="7.5" y="10" width="4" height="2.2"/></g></svg><div class="a" style="left:588px;top:84px;width:70px;height:21px;background:#fff;border:1px solid #a0a0a0"></div><svg class="a" style="left:663.8px;top:88px" width="19" height="15" viewBox="0 0 19 15"><g fill="#9a9a9a"><rect x="0" y="1" width="19" height="2.2"/><rect x="4" y="5.5" width="11" height="2.2"/><rect x="7.5" y="10" width="4" height="2.2"/></g></svg><div class="a" style="left:700px;top:84px;width:69px;height:21px;background:#fff;border:1px solid #a0a0a0"></div><svg class="a" style="left:775.2px;top:88px" width="19" height="15" viewBox="0 0 19 15"><g fill="#9a9a9a"><rect x="0" y="1" width="19" height="2.2"/><rect x="4" y="5.5" width="11" height="2.2"/><rect x="7.5" y="10" width="4" height="2.2"/></g></svg><div class="a" style="left:811px;top:84px;width:86px;height:21px;background:#fff;border:1px solid #a0a0a0"></div><svg class="a" style="left:902.9px;top:88px" width="19" height="15" viewBox="0 0 19 15"><g fill="#9a9a9a"><rect x="0" y="1" width="19" height="2.2"/><rect x="4" y="5.5" width="11" height="2.2"/><rect x="7.5" y="10" width="4" height="2.2"/></g></svg><div class="a" style="left:946px;top:84px;width:86px;height:21px;background:#fff;border:1px solid #a0a0a0"></div><svg class="a" style="left:1038.1px;top:88px" width="19" height="15" viewBox="0 0 19 15"><g fill="#9a9a9a"><rect x="0" y="1" width="19" height="2.2"/><rect x="4" y="5.5" width="11" height="2.2"/><rect x="7.5" y="10" width="4" height="2.2"/></g></svg><div class="a" style="left:1080px;top:84px;width:108px;height:21px;background:#fff;border:1px solid #a0a0a0"></div><svg class="a" style="left:1193.5px;top:88px" width="19" height="15" viewBox="0 0 19 15"><g fill="#9a9a9a"><rect x="0" y="1" width="19" height="2.2"/><rect x="4" y="5.5" width="11" height="2.2"/><rect x="7.5" y="10" width="4" height="2.2"/></g></svg><div class="cb" style="left:15px;top:120.5px"></div><svg class="a" style="left:108px;top:118px" width="19" height="20" viewBox="0 0 19 20"><path d="M3 2.5 L15 1.5 L18 4 L18 17 L15 19 L3 18Z" fill="#f4f4f4"/><path d="M3 2.5 L15 1.5 L18 4 L6 5Z" fill="#b8b8b8"/><path d="M15 5 L18 4 L18 17 L15 19Z" fill="#a8a8a8"/><text x="1.5" y="16.5" font-family="Liberation Sans" font-size="11" fill="none" stroke="#bdbdbd" stroke-width="1" font-weight="bold">3D</text></svg><div class="a nw" style="left:207.31px;top:120.20px;font-size:13px;line-height:16px;color:#333;letter-spacing:0.000px">1401</div><div class="a nw" style="left:252.81px;top:120.20px;font-size:13px;line-height:16px;color:#333;letter-spacing:0.629px">1485220348</div><div class="a nw" style="left:420.51px;top:120.20px;font-size:13px;line-height:16px;color:#555;letter-spacing:0.206px;text-decoration:underline;text-decoration-color:#777">1485220348.rvt</div><div class="a nw" style="left:631.65px;top:120.20px;font-size:13px;line-height:16px;color:#333;letter-spacing:0.471px">6.28 MB</div><div class="a nw" style="left:699.44px;top:120.20px;font-size:13px;line-height:16px;color:#333;letter-spacing:0.809px">rvt</div><div class="a nw" style="left:1079.13px;top:120.20px;font-size:13px;line-height:16px;color:#333;letter-spacing:1.080px">Draft</div><div class="cb" style="left:15px;top:149.9px"></div><svg class="a" style="left:109px;top:147.9px" width="18" height="18" viewBox="0 0 18 18"><rect x="0.5" y="0.5" width="17" height="17" fill="#5c5c5c" stroke="#505050"/><path d="M2.5 2.5 L8 2.5 L8 4.5 L15 4.5 L15 9 L13 9 L13 15 L7 15 L7 12 L2.5 12Z" fill="#6e6e6e" stroke="#cfcfcf" stroke-width="0.9"/><path d="M5 6 L9 8 L11 11" stroke="#4a4a4a" stroke-width="1.4" fill="none"/></svg><div class="a nw" style="left:207.19px;top:149.65px;font-size:13px;line-height:16px;color:#333;letter-spacing:0.000px">1130</div><div class="a nw" style="left:253.77px;top:149.65px;font-size:13px;line-height:16px;color:#333;letter-spacing:0.562px">A-1501-A(12)</div><div class="a nw" style="left:421.47px;top:149.65px;font-size:13px;line-height:16px;color:#555;letter-spacing:0.199px;text-decoration:underline;text-decoration-color:#777">A-1501-A(11).pdf</div><div class="a nw" style="left:618.61px;top:149.65px;font-size:13px;line-height:16px;color:#333;letter-spacing:0.445px">203.53 KB</div><div class="a nw" style="left:699.46px;top:149.65px;font-size:13px;line-height:16px;color:#333;letter-spacing:1.035px">pdf</div><div class="a nw" style="left:810.23px;top:149.65px;font-size:13px;line-height:16px;color:#333;letter-spacing:1.203px">Drawing</div><div class="a nw" style="left:946.87px;top:149.65px;font-size:13px;line-height:16px;color:#333;letter-spacing:1.145px">Architectural</div><div class="a nw" style="left:1079.13px;top:149.65px;font-size:13px;line-height:16px;color:#333;letter-spacing:1.080px">Draft</div><svg class="a" style="left:15px;top:178.9px" width="14" height="14" viewBox="0 0 14 14"><rect x="0" y="0" width="14" height="14" rx="2" fill="#0b6de0"/><path d="M3 7.2 L5.8 10 L11 4" fill="none" stroke="#fff" stroke-width="2"/></svg><svg class="a" style="left:109px;top:177.4px" width="18" height="18" viewBox="0 0 18 18"><rect x="0.5" y="0.5" width="17" height="17" fill="#5c5c5c" stroke="#505050"/><path d="M2.5 2.5 L8 2.5 L8 4.5 L15 4.5 L15 9 L13 9 L13 15 L7 15 L7 12 L2.5 12Z" fill="#6e6e6e" stroke="#cfcfcf" stroke-width="0.9"/><path d="M5 6 L9 8 L11 11" stroke="#4a4a4a" stroke-width="1.4" fill="none"/></svg><div class="a nw" style="left:207.30px;top:179.10px;font-size:13px;line-height:16px;color:#333;letter-spacing:0.000px">1129</div><div class="a nw" style="left:253.77px;top:179.10px;font-size:13px;line-height:16px;color:#333;letter-spacing:0.562px">A-1501-A(12)</div><div class="a nw" style="left:421.47px;top:179.10px;font-size:13px;line-height:16px;color:#555;letter-spacing:0.199px;text-decoration:underline;text-decoration-color:#777">A-1501-A(12).pdf</div><div class="a nw" style="left:618.61px;top:179.10px;font-size:13px;line-height:16px;color:#333;letter-spacing:0.445px">203.53 KB</div><div class="a nw" style="left:699.46px;top:179.10px;font-size:13px;line-height:16px;color:#333;letter-spacing:1.035px">pdf</div><div class="a nw" style="left:810.23px;top:179.10px;font-size:13px;line-height:16px;color:#333;letter-spacing:1.203px">Drawing</div><div class="a nw" style="left:946.87px;top:179.10px;font-size:13px;line-height:16px;color:#333;letter-spacing:1.145px">Architectural</div><div class="a nw" style="left:1079.61px;top:179.10px;font-size:13px;line-height:16px;color:#333;letter-spacing:1.041px">Submitted (St</div><div class="cb" style="left:15px;top:208.9px"></div><svg class="a" style="left:109px;top:206.9px" width="18" height="18" viewBox="0 0 18 18"><rect x="0.5" y="0.5" width="17" height="17" fill="#5c5c5c" stroke="#505050"/><path d="M2.5 2.5 L8 2.5 L8 4.5 L15 4.5 L15 9 L13 9 L13 15 L7 15 L7 12 L2.5 12Z" fill="#6e6e6e" stroke="#cfcfcf" stroke-width="0.9"/><path d="M5 6 L9 8 L11 11" stroke="#4a4a4a" stroke-width="1.4" fill="none"/></svg><div class="a nw" style="left:207.25px;top:208.55px;font-size:13px;line-height:16px;color:#333;letter-spacing:0.000px">1128</div><div class="a nw" style="left:253.77px;top:208.55px;font-size:13px;line-height:16px;color:#333;letter-spacing:0.560px">A-1501-A(5)</div><div class="a nw" style="left:421.47px;top:208.55px;font-size:13px;line-height:16px;color:#555;letter-spacing:0.198px;text-decoration:underline;text-decoration-color:#777">A-1501-A(5).pdf</div><div class="a nw" style="left:618.61px;top:208.55px;font-size:13px;line-height:16px;color:#333;letter-spacing:0.445px">203.53 KB</div><div class="a nw" style="left:699.46px;top:208.55px;font-size:13px;line-height:16px;color:#333;letter-spacing:1.035px">pdf</div><div class="a nw" style="left:810.23px;top:208.55px;font-size:13px;line-height:16px;color:#333;letter-spacing:1.203px">Drawing</div><div class="a nw" style="left:946.87px;top:208.55px;font-size:13px;line-height:16px;color:#333;letter-spacing:1.145px">Architectural</div><div class="a nw" style="left:1079.13px;top:208.55px;font-size:13px;line-height:16px;color:#333;letter-spacing:1.080px">Draft</div><div class="cb" style="left:15px;top:238.3px"></div><svg class="a" style="left:109px;top:236.3px" width="18" height="18" viewBox="0 0 18 18"><rect x="0.5" y="0.5" width="17" height="17" fill="#5c5c5c" stroke="#505050"/><path d="M2.5 2.5 L8 2.5 L8 4.5 L15 4.5 L15 9 L13 9 L13 15 L7 15 L7 12 L2.5 12Z" fill="#6e6e6e" stroke="#cfcfcf" stroke-width="0.9"/><path d="M5 6 L9 8 L11 11" stroke="#4a4a4a" stroke-width="1.4" fill="none"/></svg><div class="a nw" style="left:207.25px;top:238.00px;font-size:13px;line-height:16px;color:#333;letter-spacing:0.000px">1126</div><div class="a nw" style="left:253.77px;top:238.00px;font-size:13px;line-height:16px;color:#333;letter-spacing:0.562px">A-1500-A(11)</div><div class="a nw" style="left:421.47px;top:238.00px;font-size:13px;line-height:16px;color:#555;letter-spacing:0.199px;text-decoration:underline;text-decoration-color:#777">A-1500-A(11).pdf</div><div class="a nw" style="left:618.63px;top:238.00px;font-size:13px;line-height:16px;color:#333;letter-spacing:0.443px">150.63 KB</div><div class="a nw" style="left:699.46px;top:238.00px;font-size:13px;line-height:16px;color:#333;letter-spacing:1.035px">pdf</div><div class="a nw" style="left:810.23px;top:238.00px;font-size:13px;line-height:16px;color:#333;letter-spacing:1.203px">Drawing</div><div class="a nw" style="left:946.87px;top:238.00px;font-size:13px;line-height:16px;color:#333;letter-spacing:1.145px">Architectural</div><div class="a nw" style="left:1079.13px;top:238.00px;font-size:13px;line-height:16px;color:#333;letter-spacing:1.080px">Draft</div><svg class="a" style="left:14px;top:10px" width="20" height="19" viewBox="0 0 20 19"><g fill="#9a9a9a"><rect x="5" y="2" width="14" height="2.6"/><rect x="5" y="8" width="14" height="2.6"/><rect x="5" y="14" width="14" height="2.6"/><rect x="0" y="0" width="1.6" height="18"/></g></svg><div class="a nw" style="left:35.71px;top:11.50px;font-size:13px;line-height:16px;color:#666;letter-spacing:1.009px">Search</div><div class="a nw" style="left:128.80px;top:11.50px;font-size:13px;line-height:16px;color:#666;letter-spacing:0.993px">Upload File</div><div class="a nw" style="left:218.43px;top:11.50px;font-size:13px;line-height:16px;color:#666;letter-spacing:0.995px">File Actions</div><div class="a nw" style="left:339.01px;top:11.50px;font-size:13px;line-height:16px;color:#666;letter-spacing:1.035px">Send to Studio</div><div class="a nw" style="left:489.93px;top:11.50px;font-size:13px;line-height:16px;color:#666;letter-spacing:0.982px">Refresh</div><div class="a nw" style="left:571.41px;top:11.50px;font-size:13px;line-height:16px;color:#666;letter-spacing:0.791px">Save Layout</div><div class="a nw" style="left:694.43px;top:11.50px;font-size:13px;line-height:16px;color:#666;letter-spacing:0.989px">Load Default Layout</div><div class="a nw" style="left:682.34px;top:11.50px;font-size:13px;line-height:16px;color:#666;letter-spacing:0.000px">|</div><svg class="a" style="left:108px;top:10px" width="17" height="18" viewBox="0 0 17 18"><path d="M8.5 0.5 L16.5 8 L11.5 8 L11.5 17.5 L5.5 17.5 L5.5 8 L0.5 8Z" fill="#9a9a9a"/></svg><svg class="a" style="left:317px;top:10px" width="18" height="18" viewBox="0 0 18 18"><rect x="1" y="1" width="16" height="16" fill="none" stroke="#a8a8a8" stroke-width="2"/><rect x="5.5" y="5.5" width="7" height="7" fill="#b8b8b8"/></svg><svg class="a" style="left:467px;top:9px" width="20" height="20" viewBox="0 0 20 20"><path d="M3 9 A7 7 0 0 1 15.5 5" fill="none" stroke="#9a9a9a" stroke-width="3"/><path d="M17 1 L17.5 8.5 L10.5 7Z" fill="#9a9a9a"/><path d="M17 11 A7 7 0 0 1 4.5 15" fill="none" stroke="#9a9a9a" stroke-width="3"/><path d="M3 19 L2.5 11.5 L9.5 13Z" fill="#9a9a9a"/></svg></div><div class="a" style="left:682px;top:387px;width:1211px;height:1px;background:#888"></div><div class="a" style="left:682px;top:388px;width:1210px;height:5px;background:#f4f4f4"></div><div class="a" style="left:682px;top:393px;width:1211px;height:1px;background:#888"></div><div class="a" style="left:1276px;top:390px;width:2px;height:1px;background:#79a"></div><div class="a" style="left:1280px;top:390px;width:2px;height:1px;background:#79a"></div><div class="a" style="left:1284px;top:390px;width:2px;height:1px;background:#79a"></div><div class="a" style="left:1288px;top:390px;width:2px;height:1px;background:#79a"></div><div class="a" style="left:1292px;top:390px;width:2px;height:1px;background:#79a"></div><svg class="a" style="left:686px;top:400px" width="10" height="16"><path d="M9.5 0.5 L0.5 8 L9.5 15.5Z" fill="#a0a0a0"/></svg><div class="a nw" style="left:703.66px;top:401.20px;font-size:12.7px;line-height:16px;color:#f3a536;letter-spacing:0.428px">DETAILS</div><svg class="a" style="left:706px;top:400px" width="10" height="16"><path d="M0.5 0.5 L9.5 8 L0.5 15.5Z" fill="#8d8d8d"/></svg><div class="a nw" style="left:800.68px;top:401.20px;font-size:12.7px;line-height:16px;color:#52798f;letter-spacing:0.444px">ADDITIONAL INFORMATION</div><div class="a nw" style="left:1021.26px;top:401.20px;font-size:12.7px;line-height:16px;color:#52798f;letter-spacing:0.342px">CHECKLISTS</div><div class="a nw" style="left:1146.02px;top:401.20px;font-size:12.7px;line-height:16px;color:#52798f;letter-spacing:0.409px">SCORING</div><div class="a nw" style="left:1249.56px;top:401.20px;font-size:12.7px;line-height:16px;color:#52798f;letter-spacing:0.229px">RATINGS</div><div class="a nw" style="left:1349.56px;top:401.20px;font-size:12.7px;line-height:16px;color:#52798f;letter-spacing:0.419px">NOTES</div><div class="a nw" style="left:1438.28px;top:401.20px;font-size:12.7px;line-height:16px;color:#52798f;letter-spacing:0.129px">ATTACHMENTS (1)</div><div class="a nw" style="left:1597.94px;top:401.20px;font-size:12.7px;line-height:16px;color:#52798f;letter-spacing:0.516px">WORKFLOW (1/5)</div><div class="a nw" style="left:1752.86px;top:401.20px;font-size:12.7px;line-height:16px;color:#52798f;letter-spacing:0.288px">NOTIFICATIONS</div><div class="a" style="left:692px;top:428px;width:88px;height:3px;background:#f3a536"></div><div class="a" style="left:682px;top:430px;width:1184px;height:1px;background:#999"></div><div class="a" style="left:682px;top:431px;width:1184px;height:55px;background:#eeeeee"></div><div class="a" style="left:818px;top:431px;width:1px;height:55px;background:#9a9a9a"></div><div class="a" style="left:899px;top:431px;width:1px;height:55px;background:#9a9a9a"></div><svg class="a" style="left:708px;top:444px" width="30" height="29" viewBox="0 0 30 29">
<path d="M5 9 A11.5 11.5 0 1 1 4.5 19" fill="none" stroke="#9a9a9a" stroke-width="3.6"/>
<path d="M0.5 3 L9.5 10.5 L0.5 13.5Z" fill="#9a9a9a"/>
<path d="M15.5 8 L15.5 16 L10.5 16" fill="none" stroke="#9a9a9a" stroke-width="2.4"/></svg><svg class="a" style="left:768px;top:444px" width="30" height="29" viewBox="0 0 30 29">
<g fill="#9a9a9a"><rect x="8.5" y="4.5" width="19.5" height="3.8"/><rect x="8.5" y="12.5" width="19.5" height="3.8"/><rect x="8.5" y="20.5" width="19.5" height="3.8"/></g>
<g transform="scale(0.8 1)"><text x="1" y="9.5" font-family="Liberation Sans" font-size="10" font-weight="bold" fill="#9a9a9a">1</text>
<text x="1" y="18.5" font-family="Liberation Sans" font-size="10" font-weight="bold" fill="#9a9a9a">2</text>
<text x="1" y="27.5" font-family="Liberation Sans" font-size="10" font-weight="bold" fill="#9a9a9a">3</text></g></svg><svg class="a" style="left:848px;top:444px" width="29" height="29" viewBox="0 0 29 29">
<path d="M2 2 L22 2 L27 7 L27 27 L2 27Z" fill="none" stroke="#c0c0c0" stroke-width="2.6"/>
<rect x="7" y="2" width="12" height="8" fill="none" stroke="#c0c0c0" stroke-width="2.2"/>
<rect x="6" y="16" width="17" height="11" fill="none" stroke="#c0c0c0" stroke-width="2.2"/></svg><svg class="a" style="left:929px;top:444px" width="29" height="29" viewBox="0 0 29 29">
<path d="M19 2.5 L4.5 2.5 Q2.5 2.5 2.5 4.5 L2.5 24.5 Q2.5 26.5 4.5 26.5 L24.5 26.5 Q26.5 26.5 26.5 24.5 L26.5 11" fill="none" stroke="#9a9a9a" stroke-width="3"/>
<path d="M18 1 L28 1 L28 11Z" fill="#9a9a9a"/>
<line x1="25" y1="4" x2="8.5" y2="20.5" stroke="#9a9a9a" stroke-width="2.2"/></svg><div class="a" style="left:681px;top:393px;width:1px;height:645px;background:#7a7a7a"></div><div class="a" style="left:1867px;top:394px;width:25px;height:644px;background:#f0f0f0"></div><div class="a" style="left:1869px;top:419px;width:21px;height:591px;background:#c1c1c1"></div><svg class="a" style="left:1874px;top:403px" width="13" height="9"><path d="M0.5 8 L6.5 1.5 L12.5 8Z" fill="#9a9a9a"/></svg><svg class="a" style="left:1874px;top:1024px" width="13" height="9"><path d="M0.5 1 L6.5 7.5 L12.5 1Z" fill="#404040"/></svg><div class="a nw" style="left:708.43px;top:518.60px;font-size:13px;line-height:16px;color:#606060;letter-spacing:1.149px">Description</div><div class="inp" style="top:514px;background:#fff"></div><div class="a nw" style="left:890.97px;top:518.60px;font-size:13px;line-height:16px;color:#333;letter-spacing:0.163px">A-1501-A(12)</div><div class="a nw" style="left:709.21px;top:550.10px;font-size:13px;line-height:16px;color:#606060;letter-spacing:1.588px">Type</div><div class="inp" style="top:545.5px;background:#fff"><div class="dd"></div></div><div class="a nw" style="left:889.93px;top:550.10px;font-size:13px;line-height:16px;color:#333;letter-spacing:1.070px">Drawing</div><div class="a nw" style="left:708.84px;top:582.10px;font-size:13px;line-height:16px;color:#606060;letter-spacing:1.264px">Category</div><div class="inp" style="top:577.5px;background:#fff"><div class="dd"></div></div><div class="a nw" style="left:890.97px;top:582.10px;font-size:13px;line-height:16px;color:#333;letter-spacing:1.120px">Architectural</div><div class="a nw" style="left:709.44px;top:614.10px;font-size:13px;line-height:16px;color:#606060;letter-spacing:0.621px">Version</div><div class="inp" style="top:609.5px;background:#eeeeee"></div><div class="a nw" style="left:708.91px;top:646.10px;font-size:13px;line-height:16px;color:#606060;letter-spacing:1.221px">Status</div><div class="inp" style="top:641.5px;background:#eeeeee"><div class="dd"></div></div><div class="a nw" style="left:890.41px;top:646.10px;font-size:13px;line-height:16px;color:#555;letter-spacing:1.275px">Submitted</div><div class="a nw" style="left:1148.40px;top:614.10px;font-size:13px;line-height:16px;color:#555;letter-spacing:0.000px">1</div><div class="a nw" style="left:712.18px;top:679.13px;font-size:12.6px;line-height:16px;color:#8a8a8a;letter-spacing:0.189px">ATTRIBUTES</div><div class="a" style="left:814px;top:686px;width:343px;height:1px;background:#999"></div><div class="a" style="left:709px;top:705px;width:448px;height:340px;border:1px solid #555;border-bottom:none;background:#fff"></div><div class="a" style="left:710px;top:706px;width:446px;height:34px;background:#eeeeee"></div><div class="a" style="left:710px;top:740px;width:446px;height:1px;background:#111"></div><div class="a" style="left:710px;top:741px;width:446px;height:38px;background:#9a9a9a"></div><div class="a" style="left:710px;top:779px;width:446px;height:1.5px;background:#111"></div><div class="a" style="left:925px;top:741px;width:1px;height:38px;background:#b3b3b3"></div><div class="a nw" style="left:782.40px;top:754.27px;font-size:12.2px;line-height:15px;color:#fff;letter-spacing:0.432px;font-weight:bold">ATTRIBUTE</div><div class="a nw" style="left:1019.00px;top:754.27px;font-size:12.2px;line-height:15px;color:#fff;letter-spacing:0.510px;font-weight:bold">VALUE</div><div class="a" style="left:710px;top:806px;width:446px;height:1px;background:#c6c6c6"></div><div class="a nw" style="left:719.91px;top:786.40px;font-size:13px;line-height:16px;color:#333;letter-spacing:0.680px">Tracking ID*</div><div class="a nw" style="left:933.71px;top:786.40px;font-size:13px;line-height:16px;color:#333;letter-spacing:0.471px">1879050657</div><div class="a" style="left:710px;top:831px;width:446px;height:1px;background:#c6c6c6"></div><div class="a nw" style="left:719.00px;top:811.90px;font-size:13px;line-height:16px;color:#333;letter-spacing:0.958px">ID*(u)</div><div class="a nw" style="left:933.71px;top:811.90px;font-size:13px;line-height:16px;color:#333;letter-spacing:0.472px">1879053343</div><div class="a" style="left:710px;top:857px;width:446px;height:1px;background:#c6c6c6"></div><div class="a nw" style="left:719.13px;top:837.70px;font-size:13px;line-height:16px;color:#333;letter-spacing:1.194px">Document Number*</div><div class="a nw" style="left:934.67px;top:837.70px;font-size:13px;line-height:16px;color:#333;letter-spacing:0.496px">A-1006</div><div class="a" style="left:710px;top:882px;width:446px;height:1px;background:#c6c6c6"></div><div class="a nw" style="left:719.13px;top:863.50px;font-size:13px;line-height:16px;color:#333;letter-spacing:1.012px">Location</div><div class="a nw" style="left:1101.26px;top:863.50px;font-size:13px;line-height:16px;color:#333;letter-spacing:1.160px">Marina</div><div class="a" style="left:710px;top:908px;width:446px;height:1px;background:#c6c6c6"></div><div class="a nw" style="left:719.54px;top:888.90px;font-size:13px;line-height:16px;color:#333;letter-spacing:0.915px">Confidential</div><div class="a nw" style="left:1111.07px;top:888.90px;font-size:13px;line-height:16px;color:#333;letter-spacing:1.130px">False</div><div class="a" style="left:710px;top:934px;width:446px;height:1px;background:#c6c6c6"></div><div class="a nw" style="left:720.17px;top:914.90px;font-size:13px;line-height:16px;color:#333;letter-spacing:1.142px">Author</div><div class="a nw" style="left:1021.59px;top:914.90px;font-size:13px;line-height:16px;color:#333;letter-spacing:1.012px">Murphy Consultant</div><div class="a" style="left:710px;top:960px;width:446px;height:1px;background:#c6c6c6"></div><div class="a nw" style="left:719.61px;top:940.90px;font-size:13px;line-height:16px;color:#333;letter-spacing:1.206px">Size</div><div class="a nw" style="left:1131.53px;top:940.90px;font-size:13px;line-height:16px;color:#333;letter-spacing:0.000px">A1</div><div class="a" style="left:710px;top:986px;width:446px;height:1px;background:#c6c6c6"></div><div class="a nw" style="left:719.54px;top:966.90px;font-size:13px;line-height:16px;color:#333;letter-spacing:0.920px">Contract Deliverable</div><div class="a nw" style="left:1111.07px;top:966.90px;font-size:13px;line-height:16px;color:#333;letter-spacing:1.130px">False</div><div class="a" style="left:710px;top:1012px;width:446px;height:1px;background:#c6c6c6"></div><div class="a nw" style="left:720.14px;top:992.90px;font-size:13px;line-height:16px;color:#333;letter-spacing:0.021px">WBS</div><div class="a" style="left:925px;top:780px;width:1px;height:233px;background:#cfcfcf"></div><svg class="a" style="left:1390px;top:525px" width="440" height="440" viewBox="1390 525 440 440"><defs>
<pattern id="g1" width="3.8" height="3.8" patternUnits="userSpaceOnUse"><path d="M0 0 L3.8 0 M0 0 L0 3.8" stroke="#a5a5a5" stroke-width="0.6" fill="none"/></pattern>
<pattern id="g2" width="2.8" height="2.8" patternUnits="userSpaceOnUse"><path d="M0 0 L2.8 0 M0 0 L0 2.8" stroke="#8f8f8f" stroke-width="0.7" fill="none"/></pattern>
<pattern id="tx" width="12" height="2.6" patternUnits="userSpaceOnUse"><path d="M0 1 L10 1" stroke="#9a9a9a" stroke-width="1" fill="none"/></pattern>
</defs><rect x="1393" y="530" width="430" height="384" fill="#fff" stroke="#e4e4e4" stroke-width="1"/><rect x="1400" y="535" width="29" height="40" fill="url(#g2)" stroke="#9a9a9a" stroke-width="0.7"/><rect x="1399" y="578" width="22" height="10" fill="url(#tx)"/><rect x="1440" y="543" width="32" height="30" fill="url(#g1)" stroke="#9a9a9a" stroke-width="0.7"/><rect x="1448" y="580" width="14" height="2" fill="#b5b5b5"/><rect x="1478" y="543" width="27" height="30" fill="url(#g1)" stroke="#9a9a9a" stroke-width="0.7"/><rect x="1486" y="580" width="14" height="2" fill="#b5b5b5"/><rect x="1513" y="543" width="30" height="30" fill="url(#g1)" stroke="#9a9a9a" stroke-width="0.7"/><rect x="1521" y="580" width="14" height="2" fill="#b5b5b5"/><rect x="1550" y="543" width="27" height="30" fill="url(#g1)" stroke="#9a9a9a" stroke-width="0.7"/><rect x="1558" y="580" width="14" height="2" fill="#b5b5b5"/><rect x="1620" y="543" width="32" height="29" fill="url(#g2)" stroke="#9a9a9a" stroke-width="0.7"/><rect x="1620" y="580" width="22" height="8" fill="url(#tx)"/><rect x="1644" y="580" width="27" height="8" fill="url(#tx)"/><rect x="1671" y="543" width="33" height="29" fill="url(#g1)" stroke="#9a9a9a" stroke-width="0.7"/><rect x="1676" y="580" width="14" height="2" fill="#b5b5b5"/><rect x="1712" y="543" width="19" height="29" fill="url(#g1)" stroke="#9a9a9a" stroke-width="0.7"/><rect x="1717" y="580" width="14" height="2" fill="#b5b5b5"/><rect x="1740" y="543" width="30" height="29" fill="url(#g1)" stroke="#9a9a9a" stroke-width="0.7"/><rect x="1745" y="580" width="14" height="2" fill="#b5b5b5"/><rect x="1777" y="543" width="19" height="29" fill="url(#g1)" stroke="#9a9a9a" stroke-width="0.7"/><rect x="1782" y="580" width="14" height="2" fill="#b5b5b5"/><rect x="1802" y="543" width="13" height="29" fill="#7c7c7c"/><rect x="1803" y="580" width="14" height="2" fill="#b5b5b5"/><g transform="rotate(-47 1425 628)"><rect x="1398" y="617" width="46" height="22" fill="url(#g2)" stroke="#777" stroke-width="0.8"/><rect x="1444" y="615" width="26" height="24" fill="#fff" stroke="#888" stroke-width="0.9"/></g><rect x="1413" y="640" width="16" height="20" fill="url(#g2)" stroke="#9a9a9a" stroke-width="0.7"/><rect x="1402" y="662" width="20" height="8" fill="url(#tx)"/><rect x="1426" y="662" width="22" height="8" fill="url(#tx)"/><rect x="1463" y="602" width="41" height="30" fill="url(#g1)" stroke="#9a9a9a" stroke-width="0.7"/><rect x="1504" y="602" width="26" height="30" fill="none" stroke="#8a8a8a" stroke-width="0.9"/><line x1="1519.6" y1="602" x2="1519.6" y2="632" stroke="#aaa" stroke-width="0.7"/><rect x="1546" y="602" width="26" height="30" fill="url(#g1)" stroke="#9a9a9a" stroke-width="0.7"/><rect x="1580" y="602" width="32" height="30" fill="url(#g1)" stroke="#9a9a9a" stroke-width="0.7"/><rect x="1624" y="602" width="19" height="30" fill="url(#g1)" stroke="#9a9a9a" stroke-width="0.7"/><rect x="1643" y="602" width="10" height="30" fill="none" stroke="#8a8a8a" stroke-width="0.9"/><line x1="1649.0" y1="602" x2="1649.0" y2="632" stroke="#aaa" stroke-width="0.7"/><line x1="1460" y1="602" x2="1660" y2="602" stroke="#999" stroke-width="0.7"/><rect x="1465" y="640" width="12" height="2" fill="#b5b5b5"/><rect x="1540" y="640" width="12" height="2" fill="#b5b5b5"/><rect x="1582" y="640" width="12" height="2" fill="#b5b5b5"/><rect x="1625" y="640" width="12" height="2" fill="#b5b5b5"/><rect x="1463" y="657" width="16" height="24" fill="url(#g2)" stroke="#9a9a9a" stroke-width="0.7"/><rect x="1463" y="683" width="18" height="18" fill="url(#tx)"/><rect x="1492" y="655" width="16" height="31" fill="none" stroke="#8a8a8a" stroke-width="0.9"/><line x1="1501.6" y1="655" x2="1501.6" y2="686" stroke="#aaa" stroke-width="0.7"/><rect x="1493" y="692" width="14" height="2" fill="#b5b5b5"/><rect x="1518" y="655" width="15" height="31" fill="none" stroke="#8a8a8a" stroke-width="0.9"/><line x1="1527.0" y1="655" x2="1527.0" y2="686" stroke="#aaa" stroke-width="0.7"/><rect x="1519" y="692" width="14" height="2" fill="#b5b5b5"/><rect x="1543" y="655" width="15" height="31" fill="none" stroke="#8a8a8a" stroke-width="0.9"/><line x1="1552.0" y1="655" x2="1552.0" y2="686" stroke="#aaa" stroke-width="0.7"/><rect x="1544" y="692" width="14" height="2" fill="#b5b5b5"/><rect x="1566" y="655" width="17" height="31" fill="none" stroke="#8a8a8a" stroke-width="0.9"/><line x1="1576.2" y1="655" x2="1576.2" y2="686" stroke="#aaa" stroke-width="0.7"/><rect x="1567" y="692" width="14" height="2" fill="#b5b5b5"/><line x1="1488" y1="654" x2="1590" y2="654" stroke="#999" stroke-width="0.7"/><rect x="1566" y="670" width="17" height="16" fill="url(#g1)" stroke="#9a9a9a" stroke-width="0.7"/><rect x="1621" y="655" width="25" height="26" fill="url(#g2)" stroke="#9a9a9a" stroke-width="0.7"/><rect x="1621" y="692" width="20" height="8" fill="url(#tx)"/><rect x="1673" y="654" width="29" height="30" fill="url(#g1)" stroke="#9a9a9a" stroke-width="0.7"/><rect x="1675" y="692" width="14" height="2" fill="#b5b5b5"/><rect x="1710" y="654" width="18" height="30" fill="url(#g1)" stroke="#9a9a9a" stroke-width="0.7"/><rect x="1712" y="692" width="14" height="2" fill="#b5b5b5"/><rect x="1738" y="654" width="27" height="30" fill="url(#g1)" stroke="#9a9a9a" stroke-width="0.7"/><rect x="1740" y="692" width="14" height="2" fill="#b5b5b5"/><rect x="1772" y="654" width="18" height="30" fill="url(#g1)" stroke="#9a9a9a" stroke-width="0.7"/><rect x="1774" y="692" width="14" height="2" fill="#b5b5b5"/><line x1="1670" y1="654" x2="1812" y2="654" stroke="#999" stroke-width="0.7"/><rect x="1404" y="711" width="28" height="15" fill="url(#g2)" stroke="#9a9a9a" stroke-width="0.7"/><rect x="1404" y="730" width="18" height="12" fill="url(#tx)"/><rect x="1452" y="706" width="17" height="31" fill="url(#g1)" stroke="#9a9a9a" stroke-width="0.7"/><rect x="1468" y="706" width="17" height="31" fill="url(#g1)" stroke="#9a9a9a" stroke-width="0.7"/><rect x="1486" y="706" width="7" height="31" fill="url(#g1)" stroke="#9a9a9a" stroke-width="0.7"/><rect x="1499" y="706" width="7" height="31" fill="none" stroke="#8a8a8a" stroke-width="0.9"/><line x1="1503.2" y1="706" x2="1503.2" y2="737" stroke="#aaa" stroke-width="0.7"/><rect x="1513" y="706" width="9" height="31" fill="url(#g1)" stroke="#9a9a9a" stroke-width="0.7"/><rect x="1526" y="706" width="19" height="31" fill="url(#g1)" stroke="#9a9a9a" stroke-width="0.7"/><rect x="1550" y="706" width="34" height="31" fill="url(#g1)" stroke="#9a9a9a" stroke-width="0.7"/><rect x="1510" y="706" width="10" height="31" fill="url(#g2)"/><line x1="1445" y1="737" x2="1595" y2="737" stroke="#999" stroke-width="0.7"/><rect x="1452" y="745" width="12" height="2" fill="#b5b5b5"/><rect x="1490" y="745" width="12" height="2" fill="#b5b5b5"/><rect x="1512" y="745" width="12" height="2" fill="#b5b5b5"/><rect x="1535" y="745" width="12" height="2" fill="#b5b5b5"/><rect x="1560" y="745" width="12" height="2" fill="#b5b5b5"/><rect x="1622" y="708" width="32" height="23" fill="url(#g2)" stroke="#9a9a9a" stroke-width="0.7"/><rect x="1622" y="745" width="18" height="6" fill="url(#tx)"/><rect x="1675" y="706" width="32" height="31" fill="url(#g1)" stroke="#9a9a9a" stroke-width="0.7"/><rect x="1677" y="745" width="14" height="2" fill="#b5b5b5"/><rect x="1716" y="706" width="17" height="31" fill="url(#g1)" stroke="#9a9a9a" stroke-width="0.7"/><rect x="1718" y="745" width="14" height="2" fill="#b5b5b5"/><rect x="1743" y="706" width="32" height="31" fill="url(#g1)" stroke="#9a9a9a" stroke-width="0.7"/><rect x="1745" y="745" width="14" height="2" fill="#b5b5b5"/><rect x="1783" y="706" width="18" height="31" fill="url(#g1)" stroke="#9a9a9a" stroke-width="0.7"/><rect x="1785" y="745" width="14" height="2" fill="#b5b5b5"/><line x1="1668" y1="737" x2="1815" y2="737" stroke="#999" stroke-width="0.7"/><rect x="1403" y="760" width="17" height="26" fill="url(#g2)" stroke="#9a9a9a" stroke-width="0.7"/><rect x="1403" y="793" width="18" height="8" fill="url(#tx)"/><rect x="1452" y="755" width="16" height="30" fill="none" stroke="#8a8a8a" stroke-width="0.9"/><line x1="1461.6" y1="755" x2="1461.6" y2="785" stroke="#aaa" stroke-width="0.7"/><rect x="1454" y="793" width="14" height="2" fill="#b5b5b5"/><rect x="1477" y="755" width="17" height="30" fill="none" stroke="#8a8a8a" stroke-width="0.9"/><line x1="1487.2" y1="755" x2="1487.2" y2="785" stroke="#aaa" stroke-width="0.7"/><rect x="1479" y="793" width="14" height="2" fill="#b5b5b5"/><rect x="1504" y="755" width="16" height="30" fill="none" stroke="#8a8a8a" stroke-width="0.9"/><line x1="1513.6" y1="755" x2="1513.6" y2="785" stroke="#aaa" stroke-width="0.7"/><rect x="1506" y="793" width="14" height="2" fill="#b5b5b5"/><rect x="1531" y="755" width="17" height="30" fill="none" stroke="#8a8a8a" stroke-width="0.9"/><line x1="1541.2" y1="755" x2="1541.2" y2="785" stroke="#aaa" stroke-width="0.7"/><rect x="1533" y="793" width="14" height="2" fill="#b5b5b5"/><rect x="1531" y="770" width="17" height="15" fill="url(#g2)" stroke="#9a9a9a" stroke-width="0.7"/><line x1="1445" y1="785" x2="1555" y2="785" stroke="#999" stroke-width="0.7"/><rect x="1623" y="759" width="16" height="32" fill="url(#g2)" stroke="#9a9a9a" stroke-width="0.7"/><rect x="1623" y="796" width="18" height="10" fill="url(#tx)"/><rect x="1673" y="759" width="17" height="31" fill="none" stroke="#8a8a8a" stroke-width="0.9"/><line x1="1683.2" y1="759" x2="1683.2" y2="790" stroke="#aaa" stroke-width="0.7"/><rect x="1674" y="797" width="14" height="2" fill="#b5b5b5"/><rect x="1705" y="759" width="15" height="31" fill="none" stroke="#8a8a8a" stroke-width="0.9"/><line x1="1714.0" y1="759" x2="1714.0" y2="790" stroke="#aaa" stroke-width="0.7"/><rect x="1706" y="797" width="14" height="2" fill="#b5b5b5"/><rect x="1729" y="759" width="15" height="31" fill="none" stroke="#8a8a8a" stroke-width="0.9"/><line x1="1738.0" y1="759" x2="1738.0" y2="790" stroke="#aaa" stroke-width="0.7"/><rect x="1730" y="797" width="14" height="2" fill="#b5b5b5"/><rect x="1752" y="759" width="22" height="31" fill="none" stroke="#8a8a8a" stroke-width="0.9"/><line x1="1765.2" y1="759" x2="1765.2" y2="790" stroke="#aaa" stroke-width="0.7"/><rect x="1753" y="797" width="14" height="2" fill="#b5b5b5"/><rect x="1752" y="774" width="22" height="16" fill="url(#g1)" stroke="#9a9a9a" stroke-width="0.7"/><line x1="1668" y1="759" x2="1780" y2="759" stroke="#999" stroke-width="0.7"/><rect x="1805" y="764" width="16" height="67" fill="url(#tx)"/><rect x="1403" y="809" width="29" height="31" fill="url(#g2)" stroke="#9a9a9a" stroke-width="0.7"/><rect x="1403" y="846" width="18" height="8" fill="url(#tx)"/><rect x="1452" y="809" width="31" height="31" fill="url(#g1)" stroke="#9a9a9a" stroke-width="0.7"/><rect x="1455" y="847" width="14" height="2" fill="#b5b5b5"/><rect x="1488" y="809" width="19" height="31" fill="url(#g1)" stroke="#9a9a9a" stroke-width="0.7"/><rect x="1491" y="847" width="14" height="2" fill="#b5b5b5"/><rect x="1512" y="809" width="34" height="31" fill="url(#g1)" stroke="#9a9a9a" stroke-width="0.7"/><rect x="1515" y="847" width="14" height="2" fill="#b5b5b5"/><rect x="1552" y="809" width="26" height="31" fill="url(#g1)" stroke="#9a9a9a" stroke-width="0.7"/><rect x="1555" y="847" width="14" height="2" fill="#b5b5b5"/><line x1="1445" y1="809" x2="1585" y2="809" stroke="#999" stroke-width="0.7"/><rect x="1622" y="815" width="12" height="37" fill="url(#g2)" stroke="#9a9a9a" stroke-width="0.7"/><rect x="1622" y="855" width="18" height="8" fill="url(#tx)"/><rect x="1675" y="816" width="17" height="32" fill="url(#g1)" stroke="#9a9a9a" stroke-width="0.7"/><rect x="1677" y="855" width="14" height="2" fill="#b5b5b5"/><rect x="1700" y="816" width="29" height="32" fill="url(#g1)" stroke="#9a9a9a" stroke-width="0.7"/><rect x="1702" y="855" width="14" height="2" fill="#b5b5b5"/><rect x="1736" y="816" width="15" height="32" fill="url(#g1)" stroke="#9a9a9a" stroke-width="0.7"/><rect x="1738" y="855" width="14" height="2" fill="#b5b5b5"/><rect x="1759" y="816" width="27" height="32" fill="url(#g1)" stroke="#9a9a9a" stroke-width="0.7"/><rect x="1761" y="855" width="14" height="2" fill="#b5b5b5"/><line x1="1670" y1="848" x2="1795" y2="848" stroke="#999" stroke-width="0.7"/><rect x="1403" y="859" width="17" height="41" fill="url(#g2)" stroke="#9a9a9a" stroke-width="0.7"/><rect x="1403" y="903" width="18" height="8" fill="url(#tx)"/><rect x="1452" y="865" width="20" height="31" fill="url(#g1)" stroke="#9a9a9a" stroke-width="0.7"/><rect x="1455" y="902" width="14" height="2" fill="#b5b5b5"/><rect x="1478" y="865" width="33" height="31" fill="url(#g1)" stroke="#9a9a9a" stroke-width="0.7"/><rect x="1481" y="902" width="14" height="2" fill="#b5b5b5"/><rect x="1519" y="865" width="18" height="31" fill="url(#g1)" stroke="#9a9a9a" stroke-width="0.7"/><rect x="1522" y="902" width="14" height="2" fill="#b5b5b5"/><rect x="1545" y="865" width="33" height="31" fill="url(#g1)" stroke="#9a9a9a" stroke-width="0.7"/><rect x="1548" y="902" width="14" height="2" fill="#b5b5b5"/><line x1="1445" y1="896" x2="1585" y2="896" stroke="#999" stroke-width="0.7"/><rect x="1622" y="869" width="35" height="24" fill="url(#g2)" stroke="#9a9a9a" stroke-width="0.7"/><rect x="1622" y="900" width="18" height="12" fill="url(#tx)"/><rect x="1682" y="865" width="38" height="31" fill="url(#g1)" stroke="#9a9a9a" stroke-width="0.7"/><rect x="1685" y="902" width="14" height="2" fill="#b5b5b5"/><rect x="1728" y="865" width="19" height="31" fill="url(#g1)" stroke="#9a9a9a" stroke-width="0.7"/><rect x="1731" y="902" width="14" height="2" fill="#b5b5b5"/><rect x="1754" y="865" width="36" height="31" fill="url(#g1)" stroke="#9a9a9a" stroke-width="0.7"/><rect x="1757" y="902" width="14" height="2" fill="#b5b5b5"/><rect x="1797" y="865" width="19" height="31" fill="url(#g1)" stroke="#9a9a9a" stroke-width="0.7"/><rect x="1800" y="902" width="14" height="2" fill="#b5b5b5"/><line x1="1675" y1="896" x2="1820" y2="896" stroke="#999" stroke-width="0.7"/><rect x="1393" y="920" width="430" height="38" fill="#fff" stroke="#dcdcdc" stroke-width="0.8"/><rect x="1396" y="925" width="38" height="22" fill="url(#tx)"/><rect x="1437" y="922" width="86" height="28" fill="url(#g1)" opacity="0.6"/><rect x="1396" y="951" width="6" height="3" fill="#111"/><rect x="1409" y="951" width="5" height="3" fill="#111"/><rect x="1420" y="951" width="5" height="3" fill="#111"/><rect x="1445" y="951" width="21" height="3" fill="#111"/><rect x="1486" y="951" width="22" height="3" fill="#111"/><rect x="1402" y="954.5" width="4" height="3" fill="#111"/><rect x="1414" y="954.5" width="4" height="3" fill="#111"/><rect x="1426" y="954.5" width="19" height="3" fill="#111"/><rect x="1466" y="954.5" width="20" height="3" fill="#111"/><rect x="1508" y="954.5" width="17" height="3" fill="#111"/><ellipse cx="1540" cy="939" rx="11" ry="16" fill="none" stroke="#ddd" stroke-width="1"/><rect x="1537" y="937" width="12" height="3" fill="#333"/><line x1="1560" y1="921" x2="1560" y2="958" stroke="#e4e4e4"/><path d="M1593 924 L1601 924 L1608 942 L1608 924 L1614 924 L1614 952 L1607 952 L1599 934 L1597 952 L1593 952 L1595 934Z" fill="#111"/><rect x="1594" y="952" width="20" height="4" fill="url(#tx)"/><rect x="1626" y="924" width="22" height="8" fill="url(#tx)"/><rect x="1628" y="934" width="18" height="3" fill="url(#tx)"/><rect x="1668" y="928" width="22" height="8" fill="url(#tx)"/><rect x="1668" y="940" width="28" height="8" fill="url(#tx)"/><path d="M1710 947 L1710 936 L1717 936 M1710 941 L1716 941 M1710 946 L1717 946 M1719 947 L1723 933 M1726 947 L1726 936 L1733 936 M1726 941 L1732 941 M1726 946 L1733 946" stroke="#111" stroke-width="2" fill="none"/><ellipse cx="1721" cy="929" rx="3" ry="4" fill="none" stroke="#111" stroke-width="1.5"/><rect x="1710" y="950" width="24" height="3" fill="url(#tx)"/><rect x="1742" y="924" width="21" height="6" fill="#111"/><rect x="1742" y="936" width="21" height="6" fill="#111"/><rect x="1742" y="949" width="21" height="6" fill="#111"/><rect x="1770" y="923" width="50" height="8" fill="#a8a8a8"/><rect x="1772" y="934" width="48" height="3" fill="url(#tx)"/><rect x="1772" y="945" width="48" height="8" fill="url(#tx)"/></svg></body></html>
